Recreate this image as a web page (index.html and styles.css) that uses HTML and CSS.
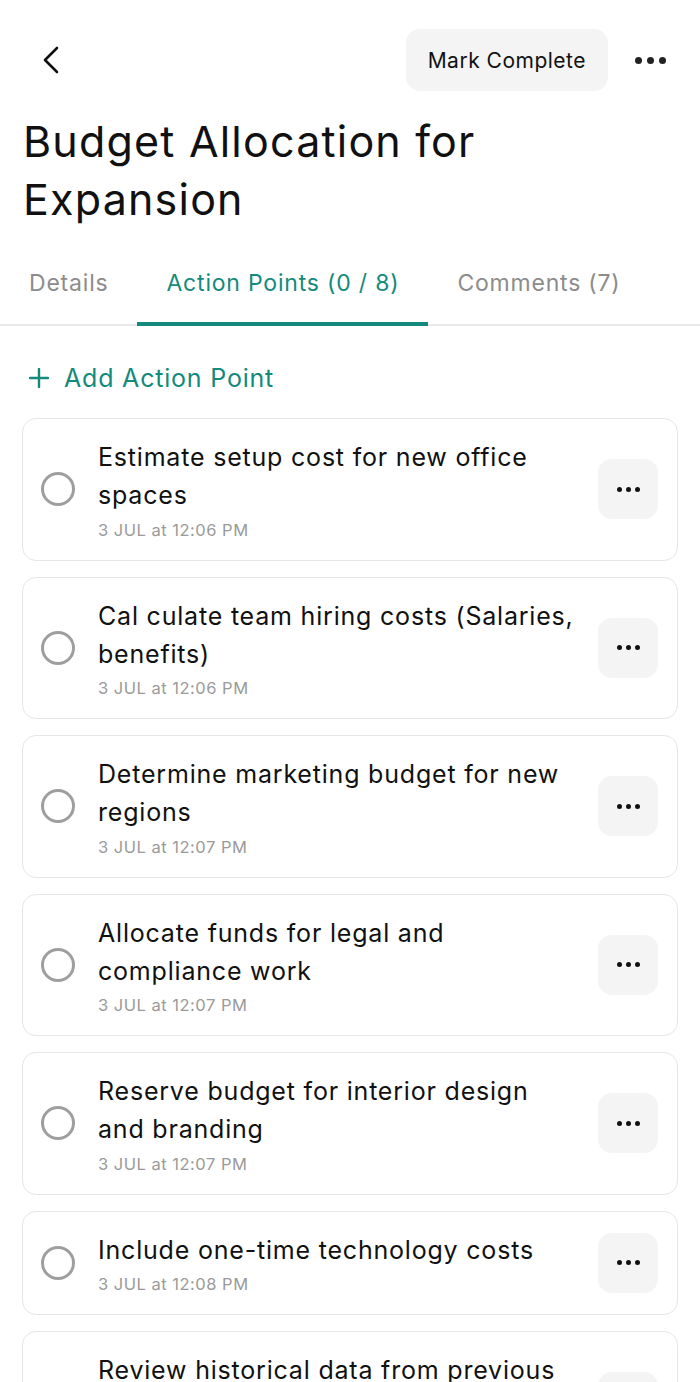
FILE: index.html
```html
<!doctype html>
<html>
<head>
<meta charset="utf-8">
<title>Budget Allocation for Expansion</title>
<link rel="stylesheet" href="styles.css">
</head>
<body>
<div class="top">
	<a class="back"><svg width="20" height="28" viewBox="0 0 20 28"><path d="M16 2 L4 14 L16 26" fill="none" stroke="#111" stroke-width="2.6" stroke-linecap="round" stroke-linejoin="round"/></svg></a>
	<div class="top-right">
		<button class="mark">Mark Complete</button>
		<span class="more"><i></i><i></i><i></i></span>
	</div>
</div>

<h1 class="title">Budget Allocation for<br>Expansion</h1>

<div class="tabs">
	<div class="tab">Details</div>
	<div class="tab on">Action Points (0 / 8)</div>
	<div class="tab">Comments (7)</div>
</div>

<div class="add">
	<svg width="20" height="20" viewBox="0 0 20 20"><path d="M10 1 V19 M1 10 H19" stroke="#148a7c" stroke-width="2.4" stroke-linecap="round"/></svg>
	<span>Add Action Point</span>
</div>

<ul class="list">
	<li class="card">
		<span class="check"></span>
		<div class="txt">
			<p class="name">Estimate setup cost for new office spaces</p>
			<p class="date">3 JUL at 12:06 PM</p>
		</div>
		<span class="opt"><i></i><i></i><i></i></span>
	</li>
	<li class="card">
		<span class="check"></span>
		<div class="txt">
			<p class="name">Cal culate team hiring costs (Salaries, benefits)</p>
			<p class="date">3 JUL at 12:06 PM</p>
		</div>
		<span class="opt"><i></i><i></i><i></i></span>
	</li>
	<li class="card">
		<span class="check"></span>
		<div class="txt">
			<p class="name">Determine marketing budget for new regions</p>
			<p class="date">3 JUL at 12:07 PM</p>
		</div>
		<span class="opt"><i></i><i></i><i></i></span>
	</li>
	<li class="card">
		<span class="check"></span>
		<div class="txt">
			<p class="name">Allocate funds for legal and compliance work</p>
			<p class="date">3 JUL at 12:07 PM</p>
		</div>
		<span class="opt"><i></i><i></i><i></i></span>
	</li>
	<li class="card">
		<span class="check"></span>
		<div class="txt">
			<p class="name">Reserve budget for interior design and branding</p>
			<p class="date">3 JUL at 12:07 PM</p>
		</div>
		<span class="opt"><i></i><i></i><i></i></span>
	</li>
	<li class="card">
		<span class="check"></span>
		<div class="txt">
			<p class="name">Include one-time technology costs</p>
			<p class="date">3 JUL at 12:08 PM</p>
		</div>
		<span class="opt"><i></i><i></i><i></i></span>
	</li>
	<li class="card">
		<span class="check"></span>
		<div class="txt">
			<p class="name">Review historical data from previous expansions</p>
			<p class="date">3 JUL at 12:08 PM</p>
		</div>
		<span class="opt"><i></i><i></i><i></i></span>
	</li>
</ul>
</body>
</html>
```
FILE: styles.css
```css
*{margin:0; padding:0; list-style:none; box-sizing:border-box;}
body{background:#fff; font-family:Inter, Roboto, "Liberation Sans", sans-serif; color:#111; overflow:hidden;}

.top{display:flex; align-items:center; justify-content:space-between; padding:29px 22px 0 41px;}
.back{display:flex; width:20px; height:28px;}
.top-right{display:flex; align-items:center; gap:27px;}
.mark{height:62px; padding:0 22px; border:0; border-radius:14px; background:#f4f4f4; font-family:inherit; font-size:21px; letter-spacing:0.5px; color:#111;}
.more{display:flex; gap:5px; padding-right:12px;}
.more i{width:7px; height:7px; border-radius:50%; background:#222;}

.title{font-size:43px; font-weight:400; line-height:58px; letter-spacing:1.2px; padding:21px 0 0 23px;}

.tabs{display:flex; margin-top:40px; border-bottom:2px solid #e8e8e8;}
.tab{position:relative; padding:0 29px 26px; font-size:23px; line-height:30px; letter-spacing:0.8px; color:#8c8c8c;}
.tab.on{color:#148a7c;}
.tab.on:after{content:""; position:absolute; left:0; right:0; bottom:-2px; height:4px; background:#148a7c;}

.add{display:flex; align-items:center; gap:15px; padding:37px 29px 0; font-size:25px; line-height:30px; letter-spacing:0.8px; color:#148a7c;}

.list{padding:25px 22px 0;}
.card{display:flex; align-items:center; border:1.5px solid #e6e6e6; border-radius:14px; padding:19px 19px 19px 18px; margin-bottom:16px;}
.check{flex:none; width:34px; height:34px; border:3px solid #9e9e9e; border-radius:50%; margin-right:23px;}
.txt{flex:1;}
.name{font-size:25px; line-height:38px; letter-spacing:0.8px; color:#111;}
.date{font-size:16.5px; line-height:22px; letter-spacing:0.5px; margin-top:4.5px; color:#9a9a9a;}
.opt{flex:none; display:flex; align-items:center; justify-content:center; gap:4px; width:60px; height:60px; margin-left:16px; border-radius:14px; background:#f4f4f4;}
.opt i{width:5px; height:5px; border-radius:50%; background:#111;}
```
